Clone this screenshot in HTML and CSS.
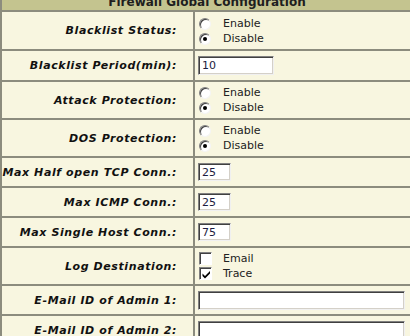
FILE: index.html
```html
<!DOCTYPE html>
<html lang="en">
<head>
    <meta charset="UTF-8">
    <title>Firewall Global Configuration</title>
    <link rel="stylesheet" href="styles.css">
</head>
<body>
    <table class="config">
        <tr>
            <td class="config-title" colspan="2">Firewall Global Configuration</td>
        </tr>
        <tr class="row-tall first">
            <td class="label">Blacklist Status:</td>
            <td class="field">
                <div class="option"><span class="radio"></span>Enable</div>
                <div class="option"><span class="radio checked"></span>Disable</div>
            </td>
        </tr>
        <tr class="row-input">
            <td class="label">Blacklist Period(min):</td>
            <td class="field"><span class="textbox medium">10</span></td>
        </tr>
        <tr class="row-tall">
            <td class="label">Attack Protection:</td>
            <td class="field">
                <div class="option"><span class="radio"></span>Enable</div>
                <div class="option"><span class="radio checked"></span>Disable</div>
            </td>
        </tr>
        <tr class="row-tall">
            <td class="label">DOS Protection:</td>
            <td class="field">
                <div class="option"><span class="radio"></span>Enable</div>
                <div class="option"><span class="radio checked"></span>Disable</div>
            </td>
        </tr>
        <tr class="row">
            <td class="label">Max Half open TCP Conn.:</td>
            <td class="field"><span class="textbox small">25</span></td>
        </tr>
        <tr class="row">
            <td class="label">Max ICMP Conn.:</td>
            <td class="field"><span class="textbox small">25</span></td>
        </tr>
        <tr class="row">
            <td class="label">Max Single Host Conn.:</td>
            <td class="field"><span class="textbox small">75</span></td>
        </tr>
        <tr class="row-tall">
            <td class="label">Log Destination:</td>
            <td class="field">
                <div class="option"><span class="checkbox"></span>Email</div>
                <div class="option">
                    <span class="checkbox">
                        <svg width="9" height="9" viewBox="0 0 9 9"><path d="M0.5 3.5 L3 6 L8 1 L8 3.5 L3 8.5 L0.5 6 Z" fill="#000"/></svg>
                    </span>Trace
                </div>
            </td>
        </tr>
        <tr class="row">
            <td class="label">E-Mail ID of Admin 1:</td>
            <td class="field"><span class="textbox wide"></span></td>
        </tr>
        <tr class="row">
            <td class="label">E-Mail ID of Admin 2:</td>
            <td class="field"><span class="textbox wide"></span></td>
        </tr>
    </table>
</body>
</html>
```

FILE: styles.css
```css
body {
    margin: 0;
    overflow: hidden;
    background-color: #f8f6e0;
    font-family: "DejaVu Sans", Verdana, sans-serif;
}

.config {
    margin-top: -14px;
    width: 414px;
    border-spacing: 2px;
    background-color: #8c8c7e;
}

.config td {
    padding: 0;
    background-color: #f8f6e0;
}

.config .config-title {
    height: 22px;
    background-color: #c4c48f;
    color: #1e1e1e;
    font-size: 12px;
    font-weight: bold;
    line-height: 16px;
    text-align: center;
    vertical-align: bottom;
}

.row-tall td {
    height: 36px;
}

.row-tall.first td {
    height: 37px;
}

.row-input td {
    height: 29px;
}

.row td {
    height: 28px;
}

.config .label {
    width: 175px;
    padding-right: 16px;
    text-align: right;
    vertical-align: middle;
    font-size: 11px;
    font-weight: bold;
    font-style: italic;
    letter-spacing: 0.6px;
    white-space: nowrap;
    color: #111;
}

.config .field {
    padding-left: 3px;
    vertical-align: middle;
    font-size: 11px;
    color: #222;
}

.option {
    display: flex;
    align-items: center;
    height: 15px;
}

.radio {
    box-sizing: border-box;
    width: 12px;
    height: 12px;
    margin: 1px 12px 0 1px;
    border: 1px solid;
    border-color: #808080 #f4f4f4 #f4f4f4 #808080;
    border-radius: 50%;
    box-shadow: inset 1px 1px 0 #404040;
    background-color: #fff;
    display: flex;
    align-items: center;
    justify-content: center;
}

.radio.checked::after {
    content: "";
    width: 4px;
    height: 4px;
    border-radius: 50%;
    background-color: #000;
}

.checkbox {
    box-sizing: border-box;
    width: 13px;
    height: 13px;
    margin: 0 11px 0 1px;
    border: 1px solid;
    border-color: #808080 #fff #fff #808080;
    box-shadow: inset 1px 1px 0 #404040;
    background-color: #fff;
    display: flex;
    align-items: center;
    justify-content: center;
}

.checkbox svg {
    margin: 1px 0 0 1px;
}

.textbox {
    box-sizing: border-box;
    display: block;
    height: 19px;
    padding: 2px 0 0 3px;
    border: 1px solid;
    border-color: #808080 #f0f0f0 #f0f0f0 #808080;
    box-shadow: inset 1px 1px 0 #404040, inset -1px -1px 0 #d4d0c8;
    background-color: #fff;
    font-size: 11px;
    line-height: 14px;
    color: #1c1c40;
}

.textbox.medium {
    width: 76px;
}

.textbox.small {
    width: 33px;
    height: 18px;
}

.textbox.wide {
    width: 207px;
}
```
